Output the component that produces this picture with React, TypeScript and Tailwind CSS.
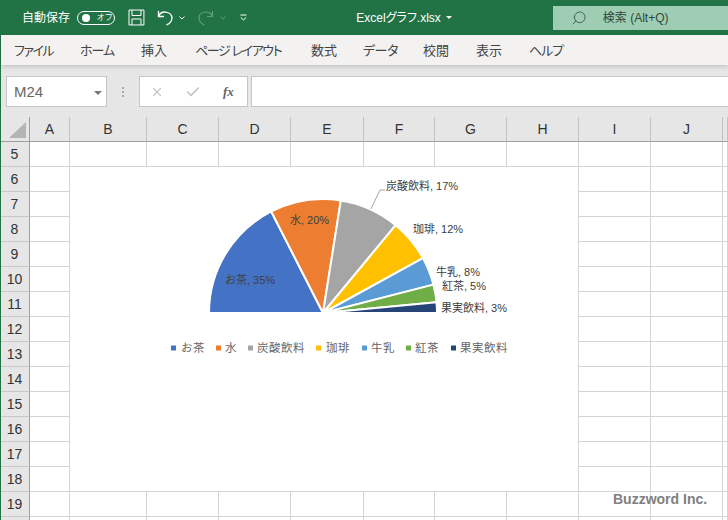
import React from 'react';
import { Check, Search, X } from 'lucide-react';

const FONT = "font-['Liberation_Sans','Noto_Sans_CJK_JP',sans-serif]";

const menus = [
  { label: 'ファイル', cls: 'w-[66px] tracking-[-1.5px]' },
  { label: 'ホーム', cls: 'w-[61px] tracking-[-1px]' },
  { label: '挿入', cls: 'w-[54px]' },
  { label: 'ページ レイアウト', cls: 'w-[116px] tracking-[-1.4px]' },
  { label: '数式', cls: 'w-[52px]' },
  { label: 'データ', cls: 'w-[60px] tracking-[-0.5px]' },
  { label: '校閲', cls: 'w-[53px]' },
  { label: '表示', cls: 'w-[53px]' },
  { label: 'ヘルプ', cls: 'w-[60px] tracking-[-1px]' },
];

const columns = ['A', 'B', 'C', 'D', 'E', 'F', 'G', 'H', 'I', 'J', ''];
const rows = ['5', '6', '7', '8', '9', '10', '11', '12', '13', '14', '15', '16', '17', '18', '19', ''];
const gridCols = 'grid grid-cols-[30px_40px_77px_72px_72px_73px_71px_72px_72px_72px_72px_5px]';

// pie data, half circle starting from the left
const slices = [
  { name: 'お茶', pct: 35, color: '#4472c4' },
  { name: '水', pct: 20, color: '#ed7d31' },
  { name: '炭酸飲料', pct: 17, color: '#a5a5a5' },
  { name: '珈琲', pct: 12, color: '#ffc000' },
  { name: '牛乳', pct: 8, color: '#5b9bd5' },
  { name: '紅茶', pct: 5, color: '#70ad47' },
  { name: '果実飲料', pct: 3, color: '#264478' },
];

const labels = [
  { text: 'お茶, 35%', x: 225, y: 284 },
  { text: '水, 20%', x: 290, y: 224 },
  { text: '炭酸飲料, 17%', x: 386, y: 190 },
  { text: '珈琲, 12%', x: 413, y: 233 },
  { text: '牛乳, 8%', x: 436, y: 276 },
  { text: '紅茶, 5%', x: 442, y: 290 },
  { text: '果実飲料, 3%', x: 441, y: 312 },
];

const legend = [
  { x: 171, tx: 181 },
  { x: 216, tx: 225 },
  { x: 248, tx: 257 },
  { x: 316, tx: 326 },
  { x: 362, tx: 371 },
  { x: 406, tx: 415 },
  { x: 451, tx: 460 },
];

const CX = 323;
const CY = 313;
const R = 114;

function slicePaths() {
  let start = 0;
  return slices.map((s) => {
    const end = start + s.pct * 1.8;
    const a0 = Math.PI - (start * Math.PI) / 180;
    const a1 = Math.PI - (end * Math.PI) / 180;
    const x0 = CX + R * Math.cos(a0);
    const y0 = CY - R * Math.sin(a0);
    const x1 = CX + R * Math.cos(a1);
    const y1 = CY - R * Math.sin(a1);
    start = end;
    return { d: `M${CX} ${CY}L${x0} ${y0}A${R} ${R} 0 0 1 ${x1} ${y1}Z`, color: s.color };
  });
}

const Chart = () => (
  <div className="absolute left-[70px] top-[50px] h-[324px] w-[508px] bg-white">
    <svg width="508" height="324" viewBox="70 167 508 324">
      {slicePaths().map((p) => (
        <path key={p.color} d={p.d} fill={p.color} stroke="#ffffff" strokeWidth="2" strokeLinejoin="round" />
      ))}
      <path d="M371 209L380 190H385" fill="none" stroke="#a6a6a6" strokeWidth="1" />
      {labels.map((l) => (
        <text key={l.text} x={l.x} y={l.y} fontSize="11" fill="#404040">
          {l.text}
        </text>
      ))}
      {slices.map((s, i) => (
        <g key={s.name}>
          <rect x={legend[i].x} y="345.5" width="5" height="5" fill={s.color} />
          <text x={legend[i].tx} y="352" fontSize="11.5" letterSpacing="0.5" fill="#666666">
            {s.name}
          </text>
        </g>
      ))}
    </svg>
  </div>
);

const TitleBar = () => (
  <div className="relative flex h-[35px] items-center bg-[#217346] text-white">
    <span className="ml-[22px] w-[55px] text-[12px]">自動保存</span>
    <div className="flex h-[14px] w-[38px] items-center rounded-full border border-white pl-[4px]">
      <span className="h-[8px] w-[8px] rounded-full bg-white" />
      <span className="ml-[7px] text-[8px] leading-none">オフ</span>
    </div>
    <svg className="ml-[13px]" width="17" height="17" viewBox="0 0 17 17" fill="none" stroke="#fff" strokeWidth="1">
      <path d="M1 1H16V16H1ZM4 1V6.5H13V1M4 16V10H13V16" />
    </svg>
    <svg className="ml-[12px]" width="17" height="17" viewBox="0 0 17 17" fill="none" stroke="#fff" strokeWidth="1.3">
      <path d="M1.5 2V7.5H7M1.8 7C3 4 5.5 2.8 8.5 3C12.5 3.3 15 6 15 9C15 12 13 14.5 9.5 16" />
    </svg>
    <svg className="ml-[6px]" width="6" height="4" viewBox="0 0 6 4" fill="none" stroke="#fff" strokeWidth="1">
      <path d="M0.5 0.5L3 3L5.5 0.5" />
    </svg>
    <svg className="ml-[12px]" width="17" height="17" viewBox="0 0 17 17" fill="none" stroke="#5f9f7e" strokeWidth="1.2">
      <path d="M15.5 2V7.5H10M15.2 7C14 4 11.5 2.8 8.5 3C4.5 3.3 2 6 2 9C2 12 4 14.5 7.5 16" />
    </svg>
    <svg className="ml-[6px]" width="6" height="4" viewBox="0 0 6 4" fill="none" stroke="#5f9f7e" strokeWidth="1">
      <path d="M0.5 0.5L3 3L5.5 0.5" />
    </svg>
    <svg className="ml-[14px]" width="7" height="7" viewBox="0 0 7 7" fill="none" stroke="#fff" strokeWidth="1">
      <path d="M0.5 1H6.5M0.8 3.5L3.5 6L6.2 3.5" />
    </svg>
    <span className="ml-[109px] w-[90px] whitespace-nowrap text-[12px] [font-feature-settings:'palt']">Excelグラフ.xlsx</span>
    <span className="h-0 w-0 border-x-[3px] border-t-[3px] border-x-transparent border-t-white" />
    <div className="ml-[101px] mt-[6px] flex h-[24px] w-[176px] items-center self-start bg-[#9fcdb3] text-[#30483c]">
      <Search className="ml-[18px] -scale-x-100" size={16} strokeWidth={1.2} />
      <span className="ml-[16px] text-[12px]">検索 (Alt+Q)</span>
    </div>
  </div>
);

const MenuBar = () => (
  <div className="flex h-[30px] items-center bg-[#f3f2f1] pl-[13px] pt-[2px] text-[13px] text-[#444444] shadow-[0_2px_4px_rgba(0,0,0,0.14)] [font-feature-settings:'palt']">
    {menus.map((m) => (
      <span key={m.label} className={`${m.cls} whitespace-nowrap`}>
        {m.label}
      </span>
    ))}
  </div>
);

const FormulaBar = () => (
  <div className="flex h-[52px] bg-[#e6e6e6] pl-[5px] pt-[11px]">
    <div className="flex h-[31px] w-[101px] items-center justify-between border border-[#c6c6c6] bg-white pl-[7px] pr-[4px] pt-[2px] text-[15px] text-[#666666]">
      <span>M24</span>
      <span className="h-0 w-0 border-x-[4px] border-t-[4px] border-x-transparent border-t-[#777777]" />
    </div>
    <div className="flex h-[31px] w-[32px] flex-col items-center justify-center gap-[2px]">
      <span className="h-[2px] w-[2px] bg-[#aaaaaa]" />
      <span className="h-[2px] w-[2px] bg-[#aaaaaa]" />
      <span className="h-[2px] w-[2px] bg-[#aaaaaa]" />
    </div>
    <div className="flex h-[31px] w-[109px] items-center border border-[#c6c6c6] bg-white pl-[10px] text-[#c4c4c4]">
      <X size={14} strokeWidth={2} />
      <Check className="ml-[21px]" size={16} strokeWidth={2.5} />
      <span className="ml-[22px] font-['Liberation_Serif',serif] text-[13px] font-bold italic text-[#666666]">fx</span>
    </div>
    <div className="ml-[3px] h-[31px] flex-1 border border-r-0 border-[#c6c6c6] bg-white" />
  </div>
);

const Sheet = () => (
  <div className="relative">
    <div className={`${gridCols} h-[25px] bg-[#e6e6e6]`}>
      <div className="relative border-r border-b border-[#9e9e9e]">
        <span className="absolute left-[9px] top-[5px] h-0 w-0 border-b-[16px] border-l-[17px] border-b-[#b4b4b4] border-l-transparent" />
      </div>
      {columns.map((c, i) => (
        <div
          key={i}
          className="flex items-center justify-center border-r border-b border-r-[#c2c2c2] border-b-[#9e9e9e] text-[14px] text-[#333333]"
        >
          {c}
        </div>
      ))}
    </div>
    {rows.map((r, idx) => (
      <div key={idx} className={`${gridCols} h-[25px]`}>
        <div className="flex items-center justify-center border-r border-b border-r-[#9e9e9e] border-b-[#c8c8c8] bg-[#e6e6e6] text-[14px] text-[#333333]">
          {r}
        </div>
        {columns.map((c, i) => (
          <div key={i} className="border-r border-b border-[#d4d4d4] bg-white" />
        ))}
      </div>
    ))}
    <Chart />
  </div>
);

const App: React.FC = () => {
  return (
    <div className={`relative h-[520px] w-[728px] overflow-hidden bg-white ${FONT}`}>
      <TitleBar />
      <div className="pl-px">
        <div className="relative z-10">
          <MenuBar />
        </div>
        <FormulaBar />
      </div>
      <Sheet />
      <div className="absolute left-0 top-[35px] h-[485px] w-px bg-[#217346]" />
      <span className="absolute left-[613px] top-[489px] text-[14px] font-bold text-[#808080]">Buzzword Inc.</span>
    </div>
  );
};

export default App;
